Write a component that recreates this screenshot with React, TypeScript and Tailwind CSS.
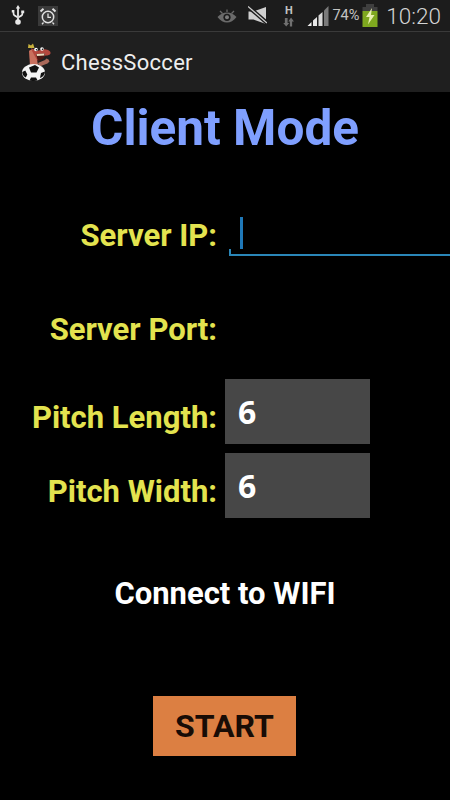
import React from "react";

function UsbIcon() {
  return (
    <svg width="14" height="22" viewBox="0 0 14 22" fill="#e8e8e8">
      <path d="M7 0l2.200 3.500H7.900V15H6.100V3.500H4.800z" />
      <path d="M0.800 5h2.600v3.200c0 1 .5 1.400 1.200 1.900l1.500 1v2l-2.600-1.700C2 10.500 1.700 9.700 1.700 8.300V7.500H.8z" />
      <path d="M10.200 5.500h3v2.700h-1v.5c0 1.300-.4 2-1.500 2.700L8 13v-2l1.900-1.200c.5-.3.700-.6.700-1.200V8.200h-.4z" />
      <circle cx="7" cy="17" r="2.800" />
    </svg>
  );
}

function AlarmIcon() {
  return (
    <div className="flex h-[20px] w-[20px] items-center justify-center bg-[#3a3a3a]">
      <svg width="18" height="18" viewBox="0 0 18 18" fill="none" stroke="#e0e0e0">
        <circle cx="9" cy="10" r="5.700" strokeWidth="1.500" />
        <path d="M9 6.500V10.300H12" strokeWidth="1.300" />
        <path d="M1.500 4.500L4.500 1.800M16.500 4.500L13.500 1.800" strokeWidth="2" />
        <path d="M4.500 15.500L3 17.200M13.500 15.500L15 17.200" strokeWidth="1.300" />
      </svg>
    </div>
  );
}

function EyeIcon() {
  return (
    <svg width="20" height="14" viewBox="0 0 20 14" fill="none">
      <path d="M0.500 8C3.500 4.800 6.500 3.500 10 3.500S16.500 4.800 19.500 8C16.500 12 13.500 13.500 10 13.500S3.500 12 0.500 8z" fill="#6a6a6a" />
      <circle cx="10" cy="8.300" r="3.600" fill="#1c1c1c" />
      <circle cx="10" cy="8.300" r="2" fill="#7c7c7c" />
      <path d="M3 2L5.500 4.500M17 2L14.500 4.500M10 0.500V3" stroke="#6a6a6a" strokeWidth="1.300" />
    </svg>
  );
}

function MuteIcon() {
  return (
    <svg width="19" height="19" viewBox="0 0 19 19">
      <path d="M0.500 5.500h5L18 1v17L5.500 13.500h-5z" fill="#d0d0d0" />
      <path d="M0 0.500L19 17" stroke="#1c1c1c" strokeWidth="4" />
      <path d="M0 0.500L19 17" stroke="#d0d0d0" strokeWidth="1.300" />
    </svg>
  );
}

function DataIcon() {
  return (
    <div className="flex flex-col items-center">
      <span className="font-['Roboto'] text-[11px] leading-[11px] font-bold text-[#c4c4c4]">H</span>
      <svg width="13" height="10" viewBox="0 0 13 11" fill="#707070" className="mt-[1px]">
        <path d="M2.500 1h3v5.500h1.800L4 10.500.7 6.500h1.800z" />
        <path d="M8 10.500h2.500V5h2L9.300.5 6.300 5H8z" />
      </svg>
    </div>
  );
}

function SignalIcon() {
  return (
    <svg width="23" height="22" viewBox="0 0 22 22" className="mt-[1px]">
      <path d="M0 21L4 17V21z" fill="#f0f0f0" />
      <path d="M5.500 15.500L9.500 12V21H5.500z" fill="#e8e8e8" />
      <path d="M11 10.500L15 7V21H11z" fill="#d8d8d8" />
      <path d="M16.500 5.500L21 1V21H16.500z" fill="#7a7a7a" />
    </svg>
  );
}

function BatteryIcon() {
  return (
    <svg width="16" height="23" viewBox="0 0 16 23">
      <rect x="4" y="0" width="8" height="3" fill="#3f3f3f" />
      <rect x="0.500" y="3" width="15" height="4" fill="#3f3f3f" />
      <rect x="0.500" y="7" width="15" height="16" fill="#7fa81f" />
      <path d="M10 4L4 13H7.500L6 20.500L12.500 11H9z" fill="#e8f0b0" />
    </svg>
  );
}

function Mascot() {
  return (
    <svg width="31" height="38" viewBox="0 0 31 38">
      {/* crown */}
      <path d="M6 5L6.500 1 9 2.500 11 0.500 12.500 5z" fill="#c9b23e" />
      {/* neck and arm */}
      <path d="M7 8c2-2 5-2 7 0l2 15H8z" fill="#c9705e" />
      <path d="M16 20l7-3 1.500-1.500 2 1 1 2-2 2-8 3z" fill="#a9695a" />
      {/* snout */}
      <path d="M9 5c3 1 4 3 6 3 3-1 6-2.500 9-1.500 3 .5 5 2 4.500 4-.5 1.500-2.500 2-5 2l-8 5c-2-3-5-8-6.500-12.500z" fill="#b4483e" />
      <path d="M14 11l9-.5-1.500 5-5.500 3z" fill="#4a1712" />
      <path d="M14.500 11l8-.5-.5 2-7 .5z" fill="#e8dcc0" />
      <circle cx="14" cy="6.500" r="1.800" fill="#fff" />
      <circle cx="20" cy="6" r="1.800" fill="#fff" />
      <circle cx="14.500" cy="6.800" r=".8" fill="#111" />
      <circle cx="20.500" cy="6.300" r=".8" fill="#111" />
      {/* ball */}
      <ellipse cx="11.500" cy="29.500" rx="11.500" ry="8.500" fill="#f4f4f4" />
      <path d="M7 24.500l6-2.500 4 2.500-2.500 5H9zM0.300 29l3-1.500 2 4-1.500 3C1.500 33.500.3 31.500.3 29zM18 35l1-5 4-1.500c0 3-2 5.500-5 6.500zM7.500 37.500l1.500-3h5l1.500 2.800c-2.500.9-5.500 1-8 .2z" fill="#111" />
    </svg>
  );
}

function FormRow({
  label,
  className,
  labelClassName,
  children,
}: {
  label: string;
  className?: string;
  labelClassName?: string;
  children?: React.ReactNode;
}) {
  return (
    <div className={`flex items-center ${className ?? ""}`}>
      <div
        className={`w-[217px] text-right font-['Roboto'] text-[31px] leading-[34px] font-bold whitespace-nowrap text-[#e3e34f] ${labelClassName ?? ""}`}
      >
        {label}
      </div>
      {children}
    </div>
  );
}

function NumberBox({ value }: { value: string }) {
  return (
    <div className="ml-[8px] flex h-[65px] w-[145px] items-center bg-[#474747] pl-[13px] font-['Open_Sans'] text-[32px] font-bold text-white">
      {value}
    </div>
  );
}

export default function App() {
  return (
    <div className="flex h-[800px] w-[450px] flex-col overflow-hidden bg-black">
      <div className="flex h-[32px] items-center border-b border-[#3a3a3a] bg-[#1c1c1c] pr-[9px] pl-[11px]">
        <UsbIcon />
        <div className="ml-[13px]">
          <AlarmIcon />
        </div>
        <div className="ml-auto flex items-center">
          <EyeIcon />
          <div className="ml-[11px]"><MuteIcon /></div>
          <div className="ml-[15px]"><DataIcon /></div>
          <div className="ml-[12px]"><SignalIcon /></div>
          <span className="ml-[2px] font-['Roboto'] text-[14.500px] text-[#c4c4c4]">74%</span>
          <div className="ml-[3px]"><BatteryIcon /></div>
          <span className="ml-[8px] font-['Roboto'] text-[22.500px] leading-[28px] font-light text-[#d4d4d4]">10:20</span>
        </div>
      </div>
      <div className="flex h-[60px] items-center bg-[#1f1f1f] pl-[22px]">
        <Mascot />
        <span className="ml-[8px] font-['Roboto'] text-[22px] tracking-[0.3px] text-[#eeeeee]">ChessSoccer</span>
      </div>
      <h1 className="mt-[7px] text-center font-['Roboto'] text-[49.500px] leading-[58px] font-bold text-[#7f9fff]">
        Client Mode
      </h1>
      <FormRow label="Server IP:" className="mt-[59px]">
        <div className="relative ml-[12px] h-[40px] flex-1 border-b-2 border-[#2a86b8]">
          <div className="absolute top-[1px] left-[11px] h-[32px] w-[3px] bg-[#1f78b8]" />
          <div className="absolute bottom-0 left-0 h-[5px] w-[2px] bg-[#2a86b8]" />
        </div>
      </FormRow>
      <FormRow label="Server Port:" className="mt-[57px]" />
      <FormRow label="Pitch Length:" labelClassName="mt-[12px]" className="mt-[32px]">
        <NumberBox value="6" />
      </FormRow>
      <FormRow label="Pitch Width:" labelClassName="mt-[12px]" className="mt-[9px]">
        <NumberBox value="6" />
      </FormRow>
      <div className="mt-[58px] text-center font-['Roboto'] text-[31px] leading-[36px] font-bold text-white">
        Connect to WIFI
      </div>
      <div className="mt-[84px] flex justify-center pr-[1px]">
        <div className="flex h-[60px] w-[143px] items-center justify-center bg-[#dc7f42] font-['Roboto'] text-[32px] font-bold text-[#180c06]">
          START
        </div>
      </div>
    </div>
  );
}
